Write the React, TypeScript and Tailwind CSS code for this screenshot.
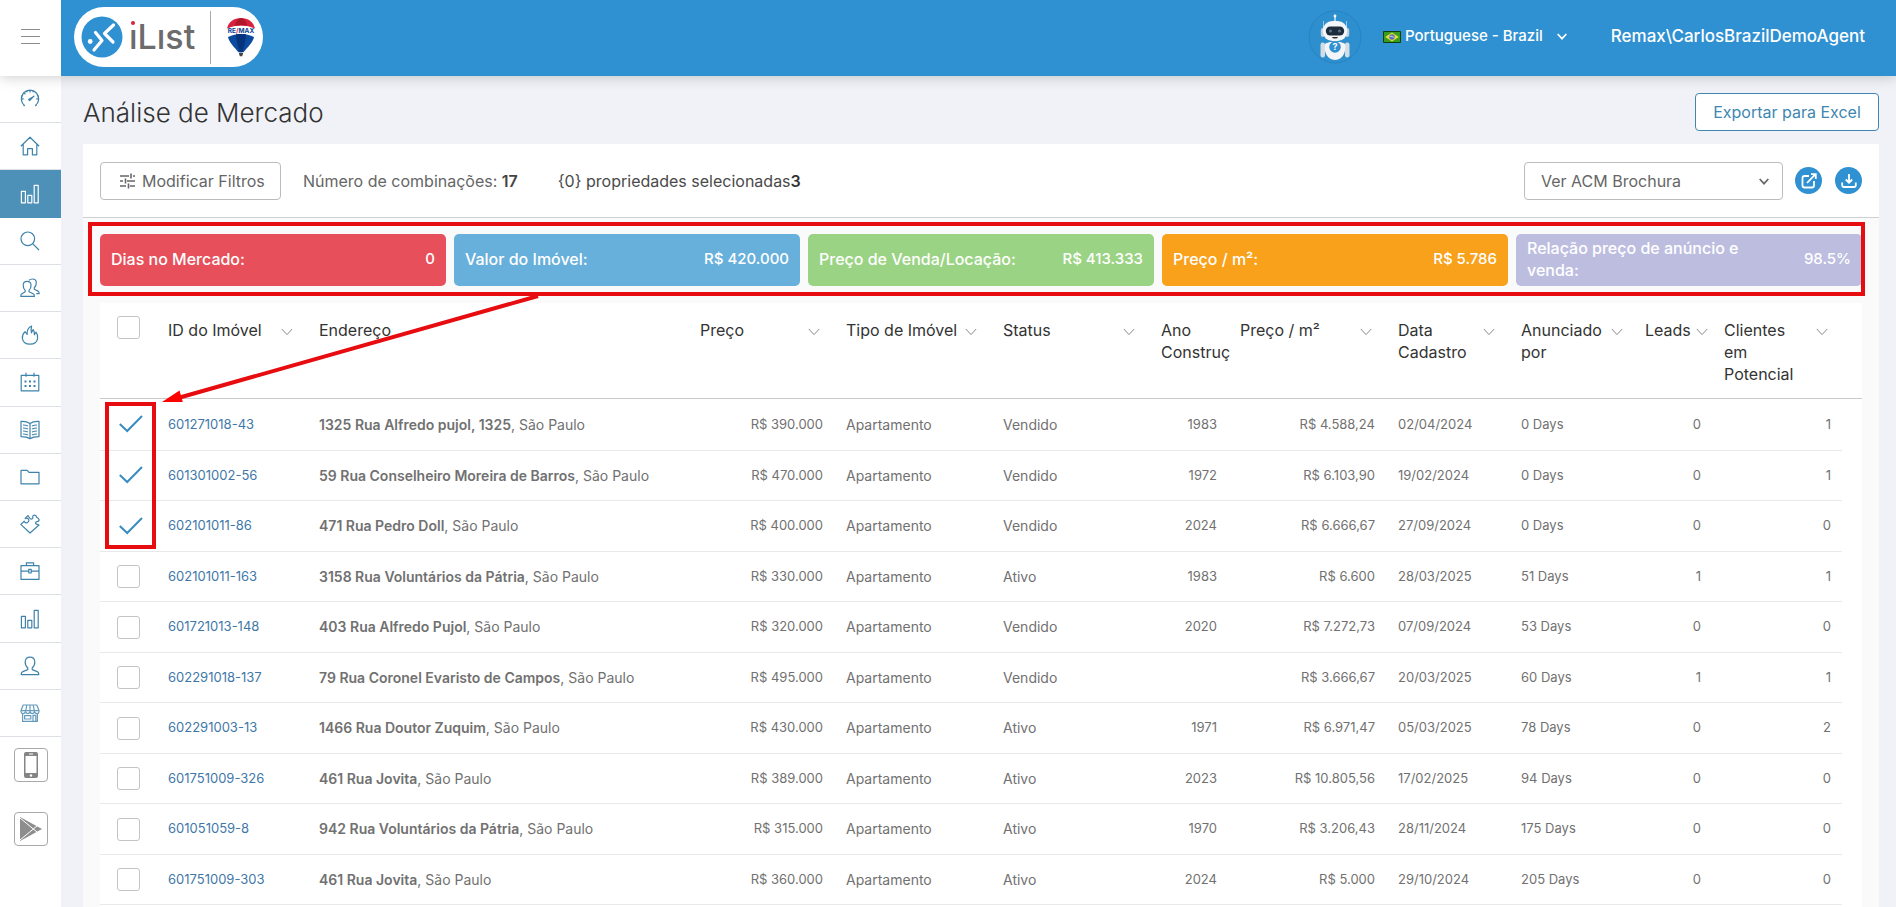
import React, { useState } from "react";

type IconProps = { className?: string };

const Svg = ({
  children,
  className = "size-5",
}: { children: React.ReactNode } & IconProps) => (
  <svg
    viewBox="0 0 20 20"
    fill="none"
    stroke="currentColor"
    strokeWidth="1.2"
    strokeLinejoin="round"
    className={className}
    aria-hidden
  >
    {children}
  </svg>
);

const GaugeIcon = () => (
  <Svg>
    <path d="M4.6 17 3.4 15.8M15.4 17l1.2-1.2M4.8 16.8A8.7 8.7 0 1 1 15.2 16.8M10 1v2.4M1.3 9.8h2.4M18.7 9.8h-2.4M3.9 3.8l1.6 1.6M6.6 1.8l.6 1.4M13.4 1.8l-.6 1.4M1.9 6.4l1.2.5M18.1 6.4l-1.2.5" />
    <path d="M8.6 10.6 14 7.2 9.6 11.6Z" />
  </Svg>
);

const HomeIcon = () => (
  <Svg>
    <path d="M.8 10.2 10 1.2l9.2 9M3.2 8.2v10.6h4.4v-6.2h4.8v6.2h4.4V8.2" />
  </Svg>
);

const ChartIcon = () => (
  <Svg>
    <path d="M1.4 7.4h4v11.4h-4zM7.8 11.4h4v7.4h-4zM14.2 1.4h4v17.4h-4z" />
  </Svg>
);

const SearchIcon = () => (
  <Svg>
    <circle cx="7.8" cy="7.8" r="6.8" />
    <path d="m12.6 12.6 6.4 6.4" />
  </Svg>
);

const UsersIcon = () => (
  <Svg>
    <path d="M5.2 12.4C3.4 10.6 3 9 3.2 6.8 3.4 4.6 5 3.4 7 3.4s3.8 1.2 4 3.4c.2 2.2-.2 3.8-2 5.6v1.4l4.6 2.2c.6.4.8 1.2.8 2.4H.8c0-1.2.2-2 .8-2.4l3.6-2.2z" />
    <path d="M9 2.4C9.8 1.4 11 1 12.4 1c2.2 0 3.8 1.4 3.9 3.6.1 2.2-.5 3.8-2 5.2v1.5l3.7 1.8c.9.5 1.2 1.3 1.2 2.5h-3" />
  </Svg>
);

const FlameIcon = () => (
  <Svg>
    <path d="M11.6 1C7.6 2.8 6.8 5.6 7.2 9.4L5 6.6C2.800 9 2 11.400 2.400 13.600 3 17 6 19.200 10 19.200s7-2.200 7.600-5.600c.4-2.400-.2-4.600-1.600-6.400l-1.600 2.600c.2-2.200-.2-3.800-1.200-5.200l-1.800 3.200C11 5.400 11 3.200 11.600 1z" />
  </Svg>
);

const CalendarIcon = () => (
  <Svg>
    <path d="M1.2 3.4h17.6v15.4H1.2zM6 .8v4M14 .8v4" />
    <path
      d="M4.5 9.4h2M9 9.4h2M13.5 9.4h2M4.5 14h2M9 14h2M13.5 14h2"
      strokeWidth="2"
    />
  </Svg>
);

const BookIcon = () => (
  <Svg>
    <path d="M10 3.6C7.4 1.6 4.4 1.2 1 1.4v15.2c3.4 0 6.4.4 9 2.2 2.6-1.8 5.6-2.2 9-2.2V1.4c-3.4-.2-6.4.2-9 2.2zM10 3.6v15.2" />
    <path d="M3 5c1.8 0 3.4.3 5 1M3 8c1.8 0 3.4.3 5 1M3 11c1.8 0 3.4.3 5 1M3 14c1.8 0 3.4.3 5 1M17 5c-1.8 0-3.4.3-5 1M17 8c-1.8 0-3.4.3-5 1M17 11c-1.8 0-3.4.3-5 1M17 14c-1.8 0-3.4.3-5 1" />
  </Svg>
);

const FolderIcon = () => (
  <Svg>
    <path d="M1 3.4h6.2l1.8 2h10v11.4H1z" />
  </Svg>
);

const PuzzleIcon = () => (
  <Svg>
    <path d="M10 19 .8 10.4 4.2 7.2c.6 1.8 2.6 2.2 3.8 1s1.2-3-.4-3.8c-.8-.4-1.6-.2-2.2.2L5.2 4.4 7.8 1.6c1.2.8 1.4 2.4 2.6 3.2 1.4.8 2.6-.2 2.4-1.8-.2-1.8 1.6-2.4 2.8-1.6 1 .8.8 2 1.800 2.400 1.400.6 2.200 2 1.200 3.200-.8 1-2.600.4-3 1.600-.4 1 .6 1.600 1.600 1.800l1.800.6z" />
  </Svg>
);

const BriefcaseIcon = () => (
  <Svg>
    <path d="M1 4.6h18v13.8H1zM6.4 4.6V1.8h7.2v2.8M1 10.2h7.8M11.2 10.2H19M8.8 8.4h2.4v3.6H8.8z" />
  </Svg>
);

const UserIcon = () => (
  <Svg>
    <path d="M7.8 12C5.8 10.2 5 8.4 5.2 5.8 5.4 2.8 7.2 1.2 10 1.2s4.6 1.6 4.8 4.6c.2 2.6-.6 4.4-2.6 6.2v1.6l5 2c1.2.5 1.6 1.6 1.6 3H1.2c0-1.4.4-2.5 1.6-3l5-2z" />
  </Svg>
);

const StoreIcon = () => (
  <Svg className="size-5 opacity-80">
    <path d="M3.2 2h13.6l2.2 5.4v1.2c0 2.6-3.6 2.6-4.5.2-.8 2.4-3.7 2.4-4.5 0-.8 2.4-3.7 2.4-4.5 0-.9 2.4-4.5 2.4-4.5-.2V7.4zM1 7.6h18M6.8 2 5.5 8.8M10 2v6.8M13.2 2l1.3 6.8M2.6 10.8v7.6h14.8v-7.6M4.6 12.6h6.2v3.4H4.6zM13 18.4v-6h2.8v6" />
  </Svg>
);

const NAV = [
  { label: "Painel", icon: GaugeIcon },
  { label: "Início", icon: HomeIcon },
  { label: "Análise", icon: ChartIcon, active: true },
  { label: "Pesquisa", icon: SearchIcon },
  { label: "Contatos", icon: UsersIcon },
  { label: "Leads", icon: FlameIcon },
  { label: "Agenda", icon: CalendarIcon },
  { label: "Livro", icon: BookIcon },
  { label: "Pastas", icon: FolderIcon },
  { label: "Integrações", icon: PuzzleIcon },
  { label: "Negócios", icon: BriefcaseIcon },
  { label: "Relatórios", icon: ChartIcon },
  { label: "Perfil", icon: UserIcon },
  { label: "Loja", icon: StoreIcon },
];

const STATS = [
  { label: "Dias no Mercado:", value: "0", color: "bg-[#e7505a]" },
  { label: "Valor do Imóvel:", value: "R$ 420.000", color: "bg-[#67b0db]" },
  {
    label: "Preço de Venda/Locação:",
    value: "R$ 413.333",
    color: "bg-[#9bd384]",
  },
  { label: "Preço / m²:", value: "R$ 5.786", color: "bg-[#f9a11b]" },
  {
    label: "Relação preço de anúncio e venda:",
    value: "98.5%",
    color: "bg-[#bdbedf]",
  },
];

const COLUMNS = [
  { label: "ID do Imóvel", width: "w-[151px]", pad: "pr-7", sort: "right-3.5" },
  { label: "Endereço", width: "w-[381px]", pad: "pr-3" },
  { label: "Preço", width: "w-[146px]", pad: "pr-7", sort: "right-3.5" },
  { label: "Tipo de Imóvel", width: "w-[157px]", pad: "pr-7", sort: "right-3.5" },
  { label: "Status", width: "w-[158px]", pad: "pr-7", sort: "right-3.5" },
  { label: "Ano Construç", width: "w-[79px]", pad: "pr-0" },
  { label: "Preço / m²", width: "w-[158px]", pad: "pr-7", sort: "right-3.5" },
  { label: "Data Cadastro", width: "w-[123px]", pad: "pr-7", sort: "right-3.5" },
  { label: "Anunciado por", width: "w-[124px]", pad: "pr-7", sort: "right-2.5" },
  { label: "Leads", width: "w-[79px]", pad: "pr-4", sort: "right-1" },
  { label: "Clientes em Potencial", width: "w-[130px]", pad: "pr-10", sort: "right-3.5" },
];

// id, street, price, status, year, price per m², date, days, leads, clients
const ROWS = [
  ["601271018-43", "1325 Rua Alfredo pujol, 1325", "390.000", "Vendido", "1983", "4.588,24", "02/04/2024", "0", "0", "1"],
  ["601301002-56", "59 Rua Conselheiro Moreira de Barros", "470.000", "Vendido", "1972", "6.103,90", "19/02/2024", "0", "0", "1"],
  ["602101011-86", "471 Rua Pedro Doll", "400.000", "Vendido", "2024", "6.666,67", "27/09/2024", "0", "0", "0"],
  ["602101011-163", "3158 Rua Voluntários da Pátria", "330.000", "Ativo", "1983", "6.600", "28/03/2025", "51", "1", "1"],
  ["601721013-148", "403 Rua Alfredo Pujol", "320.000", "Vendido", "2020", "7.272,73", "07/09/2024", "53", "0", "0"],
  ["602291018-137", "79 Rua Coronel Evaristo de Campos", "495.000", "Vendido", "", "3.666,67", "20/03/2025", "60", "1", "1"],
  ["602291003-13", "1466 Rua Doutor Zuquim", "430.000", "Ativo", "1971", "6.971,47", "05/03/2025", "78", "0", "2"],
  ["601751009-326", "461 Rua Jovita", "389.000", "Ativo", "2023", "10.805,56", "17/02/2025", "94", "0", "0"],
  ["601051059-8", "942 Rua Voluntários da Pátria", "315.000", "Ativo", "1970", "3.206,43", "28/11/2024", "175", "0", "0"],
  ["601751009-303", "461 Rua Jovita", "360.000", "Ativo", "2024", "5.000", "29/10/2024", "205", "0", "0"],
];

const Chevron = ({ className = "" }: IconProps) => (
  <svg
    viewBox="0 0 12 8"
    fill="none"
    stroke="currentColor"
    className={className}
    aria-hidden
  >
    <path d="m.8 1 5.2 5.6L11.2 1" />
  </svg>
);

const Logo = () => (
  <a
    href="#"
    className="mb-0.5 ml-[13px] flex h-[60px] items-center rounded-full bg-white pl-[7px] pr-[7px]"
  >
    <svg viewBox="0 0 42 42" className="size-[42px]" aria-hidden>
      <circle cx="21" cy="21" r="20.5" fill="#2f91d1" />
      <g
        fill="none"
        stroke="#fff"
        strokeWidth="3.2"
        strokeLinecap="round"
        strokeLinejoin="round"
      >
        <path d="m14.500 16.500 6.500 8-8 9.500M32.500 9 23.500 17.500l8.500 8.500" />
      </g>
      <circle cx="9.2" cy="25.5" r="2.4" fill="#fff" />
    </svg>
    <span className="relative ml-1.5 w-[73px] whitespace-nowrap text-[34px] font-medium leading-[42px] text-[#6c6c6c]">
      ıLıst
      <span className="absolute left-[2px] top-[5px] size-1 rounded-full bg-[#d6203c]" />
    </span>
    <span className="ml-2 h-[53px] w-px bg-[#aaa]" />
    <svg viewBox="0 0 30 40" className="ml-[15px] h-10 w-[30px]" aria-hidden>
      <path d="M1 11.5C2.5 5 8 1 15 1s12.5 4 14 10.500C20 7.500 10 7.500 1 11.500z" fill="#d6203c" />
      <path d="M9 8.800c.5-4 2.500-6.800 6-7.800 3.500 1 5.500 3.800 6 7.800-4-.7-8-.7-12 0z" fill="#b0152c" />
      <text x="15" y="15.6" textAnchor="middle" fontSize="6.5" fontWeight="700" fill="#0c4090">
        RE<tspan fill="#d6203c">/</tspan>MAX
      </text>
      <path d="M2 20c8-4 18-4 26 0-1 5-6 10-10.500 15.200h-5C8 30 3 25 2 20z" fill="#0b4a9e" />
      <path d="M10 17.300c3.400-.5 6.600-.5 10 0 0 6-2 12-3.600 17.900h-2.800C12 29.300 10 23.300 10 17.300z" fill="#06347c" />
      <path d="M12.800 36h4.400l-1 3.200h-2.400z" fill="#444" />
    </svg>
  </a>
);

const Robot = () => (
  <svg viewBox="0 0 56 56" className="size-14" aria-hidden>
    <circle cx="28" cy="28" r="26" fill="#2e8fce" stroke="#2784c2" />
    <path d="M28 6v7" stroke="#cfe6f6" strokeWidth="1.5" />
    <circle cx="28" cy="7" r="1.4" fill="#fff" />
    <path d="M16.5 12v8M39.5 12v8" stroke="#9cc9e8" />
    <rect x="13.8" y="19" width="4" height="9" rx="2" fill="#c4d2dd" />
    <rect x="38.2" y="19" width="4" height="9" rx="2" fill="#c4d2dd" />
    <rect x="15.8" y="12" width="24.4" height="20" rx="9.5" fill="#f3f6f9" />
    <rect x="18.8" y="17.5" width="18.4" height="9" rx="4.5" fill="#1d2b3a" />
    <circle cx="23.5" cy="22" r="1.6" fill="#53718a" />
    <circle cx="32.5" cy="22" r="1.6" fill="#53718a" />
    <path d="M25 28h6c-.5 2-5.500 2-6 0z" fill="#333" />
    <rect x="13.5" y="33.5" width="4.5" height="15" rx="2.2" fill="#d4dde5" />
    <rect x="38" y="33.5" width="4.5" height="15" rx="2.2" fill="#d4dde5" />
    <path d="M18 35c3-3 17-3 20 0 1.500 7-2 16-10 16s-11.500-9-10-16z" fill="#f3f6f9" />
    <circle cx="28" cy="38" r="5.8" fill="#2f91d1" />
    <text x="28" y="41.2" textAnchor="middle" fontSize="9" fontWeight="700" fill="#fff">
      ?
    </text>
  </svg>
);

const Flag = () => (
  <svg viewBox="0 0 18 12" className="h-3 w-[18px]" aria-hidden>
    <path d="M0 0h18v12H0z" fill="#3a9c1a" />
    <path d="M.5.5h17v11H.5z" fill="none" stroke="#123f0c" />
    <path d="m9 1.4 6.8 4.6L9 10.6 2.2 6z" fill="#dfe03c" />
    <circle cx="9" cy="6" r="2.8" fill="#5b6cb0" />
    <path d="M6.6 5.4c1.8-.3 3.4.1 4.8 1.3" stroke="#fff" strokeWidth=".7" fill="none" />
  </svg>
);

const Sidebar = () => (
  <aside className="flex w-[61px] shrink-0 flex-col bg-white">
    <nav className="flex h-[661px] flex-col" aria-label="Principal">
      {NAV.map(({ label, icon: Icon, active }) => (
        <a
          key={label}
          href="#"
          aria-label={label}
          className={`flex flex-1 items-center justify-center border-b pr-0.5 ${
            active
              ? "border-[#4d90b8] bg-[#4d90b8] text-white"
              : "border-[#dcdfe3] text-[#3f83ab]"
          }`}
        >
          <Icon />
        </a>
      ))}
    </nav>
    <div className="flex flex-col items-center gap-[30px] pt-[11px]">
      <a
        href="#"
        aria-label="App Store"
        className="flex size-[34px] items-center justify-center rounded-[4px] border border-[#a9a9a9]"
      >
        <svg viewBox="0 0 14 26" className="h-[26px] w-3.5" aria-hidden>
          <rect width="14" height="26" rx="2" fill="#858585" />
          <path d="M1.5 4h11v17h-11z" fill="#fff" />
          <path d="M5 2h4" stroke="#fff" />
          <circle cx="7" cy="23.5" r="1.2" fill="#fff" />
        </svg>
      </a>
      <a
        href="#"
        aria-label="Google Play"
        className="flex size-[34px] items-center justify-center rounded-[4px] border border-[#a9a9a9]"
      >
        <svg viewBox="0 0 22 24" className="h-6 w-[22px]" aria-hidden>
          <path d="M0 0 22 12 0 24z" fill="#8d8d8d" />
          <path d="m0 1 17 14M0 23 17 9" stroke="#fff" />
        </svg>
      </a>
    </div>
  </aside>
);

const TopBar = () => (
  <header className="relative z-20 flex h-[76px] items-center bg-[#2f91d1] text-white shadow-[0_2px_12px_rgba(0,0,0,0.18)]">
    <button
      type="button"
      aria-label="Menu"
      className="flex h-full w-[61px] items-center justify-center bg-white pb-0.5 text-[#8d8d8d]"
    >
      <svg viewBox="0 0 19 16" className="h-4 w-[19px]" aria-hidden>
        <path d="M0 .5h19M0 7.500h19M0 14.500h19" stroke="currentColor" />
      </svg>
    </button>
    <Logo />
    <div className="ml-auto flex items-center pb-[3px] pr-[31px]">
      <Robot />
      <button
        type="button"
        className="ml-5 flex items-center text-[15px] font-medium"
      >
        <Flag />
        <span className="ml-1">Portuguese - Brazil</span>
        <Chevron className="ml-[14px] h-[7px] w-2.5 stroke-2" />
      </button>
      <a href="#" className="ml-11 text-[17px] font-medium">
        Remax\CarlosBrazilDemoAgent
      </a>
    </div>
  </header>
);

const Toolbar = () => (
  <div className="flex h-[74px] items-center border-b border-[#cfcfd4] px-[17px] text-[16px] text-[#666]">
    <button
      type="button"
      className="flex h-[38px] w-[181px] items-center rounded-[4px] border border-[#bcbcbc] pl-[19px]"
    >
      <svg viewBox="0 0 16 16" className="size-4" aria-hidden>
        <path
          d="M0 3h9M13 3h2M11 .5v5M0 8h3M7 8h8M5.5 5.5v5M0 13h6M10 13h5M8.5 10.5v5"
          stroke="currentColor"
          strokeWidth="1.6"
          fill="none"
        />
      </svg>
      <span className="ml-1.5">Modificar Filtros</span>
    </button>
    <p className="ml-[22px]">
      Número de combinações: <b className="font-semibold text-[#444]">17</b>
    </p>
    <p className="ml-10 text-[#4a4a4a]">
      {"{0}"} propriedades selecionadas
      <b className="font-semibold text-[#333]">3</b>
    </p>
    <div className="relative ml-auto w-[259px]">
      <select
        aria-label="Brochura"
        className="h-[38px] w-full appearance-none rounded-[4px] border border-[#bcbcbc] bg-white pl-4"
      >
        <option>Ver ACM Brochura</option>
      </select>
      <Chevron className="pointer-events-none absolute right-3.5 top-4 h-[7px] w-2.5 stroke-2" />
    </div>
    <button
      type="button"
      aria-label="Abrir"
      className="ml-3 flex size-[27px] items-center justify-center rounded-full bg-[#2f91d1] text-white"
    >
      <svg viewBox="0 0 16 16" className="size-4" fill="none" stroke="currentColor" strokeWidth="1.8" aria-hidden>
        <path d="M8 3H3.500C2 3 1.500 3.500 1.500 5v7.500c0 1.500.5 2 2 2H11c1.500 0 2-.5 2-2V8M6 10l8-8.300M10 1.200h4.800V6" />
      </svg>
    </button>
    <button
      type="button"
      aria-label="Baixar"
      className="ml-[13px] flex size-[27px] items-center justify-center rounded-full bg-[#2f91d1] text-white"
    >
      <svg viewBox="0 0 16 16" className="size-4" fill="none" stroke="currentColor" strokeWidth="1.8" aria-hidden>
        <path d="M8 1v8.500M4.800 6.500 8 9.700l3.200-3.200M1.200 9.500v3c0 1 .5 1.500 1.500 1.500h10.600c1 0 1.500-.5 1.500-1.500v-3" />
      </svg>
    </button>
  </div>
);

const Stats = () => (
  <div className="relative px-[17px] pb-[17px] pt-4">
    <div className="grid grid-cols-5 gap-2">
      {STATS.map((s) => (
        <div
          key={s.label}
          className={`flex h-[52px] items-center justify-between gap-8 rounded-[5px] px-[11px] pb-0.5 text-[16px] font-medium leading-[22px] text-white ${s.color}`}
        >
          <span>{s.label}</span>
          <span className="whitespace-nowrap text-[15px]">{s.value}</span>
        </div>
      ))}
    </div>
    {/* highlight frames and the arrow between them */}
    <div className="pointer-events-none absolute left-[5px] right-[14px] top-1 z-10 h-[74px] border-4 border-[#e60c0f]" />
    <svg
      viewBox="0 0 380 110"
      className="pointer-events-none absolute left-[79px] top-[76px] z-10 h-[110px] w-[380px]"
      aria-hidden
    >
      <path d="M376 2 16 104" stroke="#e60c0f" strokeWidth="4" />
      <path d="M0 108 17.500 96.500l3.300 11.500z" fill="#f00" />
    </svg>
    <div className="pointer-events-none absolute left-[22px] top-[184px] z-10 h-[147px] w-[51px] border-4 border-[#e60c0f]" />
  </div>
);

const Check = ({
  checked,
  label,
  onChange,
}: {
  checked: boolean;
  label: string;
  onChange: () => void;
}) => (
  <span className="relative block h-[23px]">
    <input
      type="checkbox"
      aria-label={label}
      checked={checked}
      onChange={onChange}
      className="peer block size-[23px] appearance-none rounded-[3px] border border-[#c4c4c4] bg-white checked:border-transparent checked:bg-transparent"
    />
    <svg
      viewBox="0 0 24 18"
      className="pointer-events-none absolute left-0.5 top-0.5 hidden h-[18px] w-6 peer-checked:block"
      aria-hidden
    >
      <path d="m.8 9 7.400 7L23 1" fill="none" stroke="#3a8cc0" strokeWidth="2" />
    </svg>
  </span>
);

const MarketTable = () => {
  const [selected, setSelected] = useState([0, 1, 2]);

  const toggle = (i: number) =>
    setSelected((prev) =>
      prev.includes(i) ? prev.filter((n) => n !== i) : [...prev, i],
    );

  const toggleAll = () =>
    setSelected((prev) =>
      prev.length === ROWS.length ? [] : ROWS.map((_, i) => i),
    );

  const words = "border-b border-[#e9e9eb] pb-px pl-3 text-[14px]";
  const digits = "border-b border-[#e9e9eb] pl-3 text-[13px]";

  return (
    <div className="mx-[17px] flex-1 bg-white">
      <table className="w-full table-fixed border-separate border-spacing-0 text-left text-[#717171]">
        <colgroup>
          <col className="w-[56px]" />
          {COLUMNS.map((c) => (
            <col key={c.label} className={c.width} />
          ))}
          <col className="w-5" />
        </colgroup>
        <thead>
          <tr className="h-24 align-top text-[16px] leading-[22px] text-[#333]">
            <th className="border-b border-[#c9c9cd] pl-[17px] pt-[13px]">
              <Check
                checked={selected.length === ROWS.length}
                label="Selecionar todos"
                onChange={toggleAll}
              />
            </th>
            {COLUMNS.map((c) => (
              <th
                key={c.label}
                className={`relative border-b border-[#c9c9cd] pl-3 pt-4 font-normal ${c.pad}`}
              >
                {c.label}
                {c.sort && (
                  <Chevron
                    className={`absolute top-[25px] h-2 w-3 text-[#8a8a8a] ${c.sort}`}
                  />
                )}
              </th>
            ))}
            <th className="border-b border-[#c9c9cd]" />
          </tr>
        </thead>
        <tbody>
          {ROWS.map((r, i) => (
            <tr
              key={r[0]}
              className={i === 0 ? "h-[52px]" : "odd:h-[51px] even:h-[50px]"}
            >
              <td className="border-b border-[#e9e9eb] pl-[17px]">
                <Check
                  checked={selected.includes(i)}
                  label={r[0]}
                  onChange={() => toggle(i)}
                />
              </td>
              <td className={digits}>
                <a href="#" className="text-[#3f78a8]">
                  {r[0]}
                </a>
              </td>
              <td className={words}>
                <b className="font-semibold">{r[1]}</b>, São Paulo
              </td>
              <td className={`${digits} pr-[11px] text-right`}>R$ {r[2]}</td>
              <td className={words}>Apartamento</td>
              <td className={words}>{r[3]}</td>
              <td className={`${digits} pr-[11px] text-right`}>{r[4]}</td>
              <td className={`${digits} pr-[11px] text-right`}>R$ {r[5]}</td>
              <td className={digits}>{r[6]}</td>
              <td className={digits}>{r[7]} Days</td>
              <td className={`${digits} pr-[11px] text-right`}>{r[8]}</td>
              <td className={`${digits} pr-[11px] text-right`}>{r[9]}</td>
              <td />
            </tr>
          ))}
        </tbody>
      </table>
    </div>
  );
};

const App = () => (
  <div className="flex min-h-screen flex-col bg-[#f1f2f7] font-[Inter,sans-serif]">
    <TopBar />
    <div className="flex flex-1">
      <Sidebar />
      <main className="flex min-w-0 flex-1 flex-col pl-[22px] pr-[17px]">
        <div className="flex h-[68px] items-center justify-between pt-1">
          <h1 className="text-[26px] font-light text-[#333]">
            Análise de Mercado
          </h1>
          <button
            type="button"
            className="h-[38px] w-[184px] rounded-[4px] border border-[#4087b0] bg-white text-[16px] text-[#4087b0]"
          >
            Exportar para Excel
          </button>
        </div>
        <section className="flex flex-1 flex-col bg-[#fafafb]">
          <div className="bg-white">
            <Toolbar />
          </div>
          <Stats />
          <MarketTable />
        </section>
      </main>
    </div>
  </div>
);

export default App;
